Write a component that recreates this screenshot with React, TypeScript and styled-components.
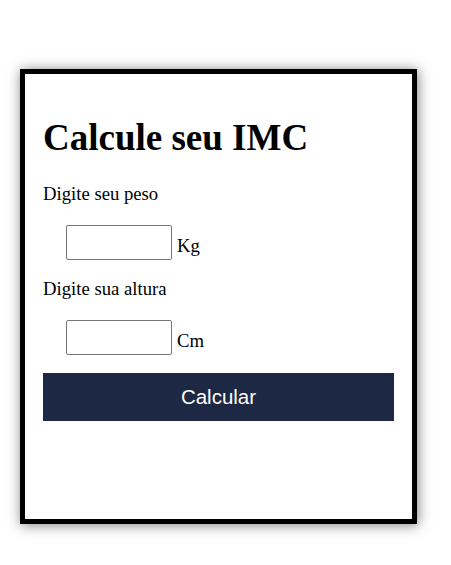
import React from "react";
import styled, { createGlobalStyle } from "styled-components";

const GlobalStyle = createGlobalStyle`
  html, body {
    margin: 0;
    padding: 0;
    background: #ffffff;
  }
  body {
    font-family: "Liberation Serif", "Times New Roman", serif;
    color: #000;
  }
`;

const Page = styled.div`
  padding: 69px 0 40px 20px;
`;

const Card = styled.form`
  box-sizing: border-box;
  width: 397px;
  height: 455px;
  border: 5px solid #000;
  background: #fff;
  padding: 43px 18px 18px;
  box-shadow: 1px 1px 12px rgba(0, 0, 0, 0.5);
  display: flex;
  flex-direction: column;
`;

const Title = styled.h1`
  margin: 0 0 24px;
  font-size: 37px;
  line-height: 42px;
  font-weight: bold;
`;

const Label = styled.label`
  display: block;
  font-size: 18.7px;
  line-height: 22px;
  margin: 0 0 20px;
`;

const InputRow = styled.div<{ $gap: number }>`
  display: flex;
  align-items: center;
  padding-left: 23px;
  margin-bottom: ${(p) => p.$gap}px;
`;

const Field = styled.input`
  box-sizing: border-box;
  width: 106px;
  height: 35px;
  border: 1px solid #767676;
  border-radius: 2px;
  padding: 1px 2px;
  font-size: 16px;
  background: #fff;
`;

const Unit = styled.span`
  font-size: 18.7px;
  line-height: 22px;
  margin-left: 5px;
  padding-top: 6px;
`;

const Button = styled.button`
  height: 48px;
  width: 100%;
  border: none;
  background: #1c2844;
  color: #fff;
  font-family: "Liberation Sans", Arial, sans-serif;
  font-size: 20.5px;
  cursor: pointer;
`;

export default function App() {
  return (
    <>
      <GlobalStyle />
      <Page>
        <Card onSubmit={(e) => e.preventDefault()}>
          <Title>Calcule seu IMC</Title>
          <Label htmlFor="peso">Digite seu peso</Label>
          <InputRow $gap={18}>
            <Field id="peso" type="text" />
            <Unit>Kg</Unit>
          </InputRow>
          <Label htmlFor="altura">Digite sua altura</Label>
          <InputRow $gap={18}>
            <Field id="altura" type="text" />
            <Unit>Cm</Unit>
          </InputRow>
          <Button type="submit">Calcular</Button>
        </Card>
      </Page>
    </>
  );
}
